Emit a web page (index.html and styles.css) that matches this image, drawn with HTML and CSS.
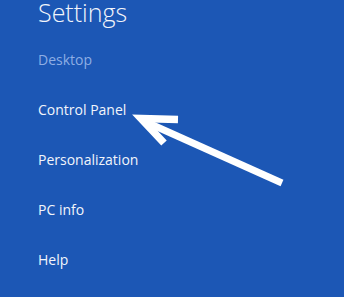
FILE: index.html
```html
<!DOCTYPE html>
<html lang="en">
<head>
  <meta charset="UTF-8" />
  <title>Settings</title>
  <link rel="stylesheet" href="styles.css">
</head>
<body>
  <div class="charm">
    <h1>Settings</h1>
    <ul class="items">
      <li class="dim">Desktop</li>
      <li>Control Panel</li>
      <li>Personalization</li>
      <li>PC info</li>
      <li>Help</li>
    </ul>
  </div>

  <svg class="arrow" width="344" height="297" viewBox="0 0 344 297">
    <polyline points="178,119.5 141,118.5 164,143" fill="none" stroke="#fff" stroke-width="7.5" stroke-linejoin="miter" />
    <line x1="146" y1="122" x2="282" y2="183" stroke="#fff" stroke-width="7" />
  </svg>
</body>
</html>
```

FILE: styles.css
```css
html, body {
  margin: 0;
  height: 100%;
}
body {
  background-color: #1c57b5;
  color: #f2f5fb;
  font-family: "Open Sans", sans-serif;
  overflow: hidden;
}
.charm {
  padding-left: 38px;
}
h1 {
  margin: 0;
  font-size: 25px;
  font-weight: 340;
  line-height: 24px;
}
.items {
  list-style: none;
  margin: 11px 0 0;
  padding: 0;
}
.items li {
  font-size: 14px;
  font-weight: 370;
  line-height: 50px;
}
.items .dim {
  color: #8eaee4;
}
.arrow {
  position: absolute;
  left: 0;
  top: 0;
}
```
